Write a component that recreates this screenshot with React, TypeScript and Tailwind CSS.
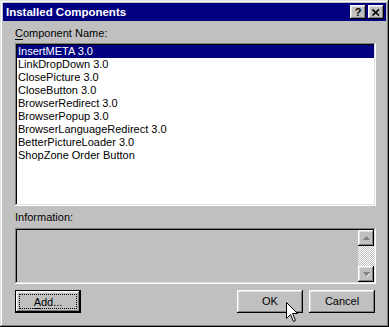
import React from "react";

const ITEMS = [
  "InsertMETA 3.0",
  "LinkDropDown 3.0",
  "ClosePicture 3.0",
  "CloseButton 3.0",
  "BrowserRedirect 3.0",
  "BrowserPopup 3.0",
  "BrowserLanguageRedirect 3.0",
  "BetterPictureLoader 3.0",
  "ShopZone Order Button",
];

const raised =
  "shadow-[inset_-1px_-1px_#000000,inset_1px_1px_#ffffff,inset_-2px_-2px_#808080,inset_2px_2px_#dfdfdf]";
const sunken =
  "shadow-[inset_-1px_-1px_#ffffff,inset_1px_1px_#808080,inset_-2px_-2px_#dfdfdf,inset_2px_2px_#000000]";

function Arrow({ up }: { up?: boolean }) {
  return (
    <svg width="7" height="5" viewBox="0 0 7 5" className="block">
      {up ? (
        <path d="M3.5 0 L7 4 L0 4 Z" fill="#808080" />
      ) : (
        <>
          <path d="M0 0 L7 0 L3.5 4 Z" fill="#808080" />
          <path d="M4 4.5 L7 1.5" stroke="#ffffff" strokeWidth="1" />
        </>
      )}
    </svg>
  );
}

function Button({ label, accel, isDefault }: { label: string; accel?: boolean; isDefault?: boolean }) {
  const text = accel ? (
    <>
      <span className="underline underline-offset-2">{label[0]}</span>
      {label.slice(1)}
    </>
  ) : (
    label
  );
  if (isDefault) {
    return (
      <div className="w-[66px] h-[23px] border border-black">
        <div className={`w-full h-full p-[3px] ${raised}`}>
          <div className="w-full h-full border border-dotted border-black flex items-center justify-center pt-px">
            {text}
          </div>
        </div>
      </div>
    );
  }
  return (
    <div className={`w-[66px] h-[23px] flex items-center justify-center ${raised}`}>{text}</div>
  );
}

export default function App() {
  return (
    <div
      className="relative w-[389px] h-[327px] bg-[#c0c0c0] p-[3px] flex flex-col text-[11px] leading-[13px] text-black select-none shadow-[inset_-1px_-1px_#000000,inset_1px_1px_#dfdfdf,inset_-2px_-2px_#808080,inset_2px_2px_#ffffff]"
      style={{ fontFamily: '"Liberation Sans", Arial, sans-serif' }}
    >
      {/* Title bar */}
      <div className="h-[18px] bg-[#000080] flex items-center pl-[3px] pr-[2px]">
        <span className="text-white font-bold text-[11.5px] flex-1">Installed Components</span>
        <div
          className={`w-[16px] h-[14px] bg-[#c0c0c0] text-black flex items-center justify-center font-bold text-[11px] ${raised}`}
        >
          ?
        </div>
        <div className={`ml-[2px] w-[16px] h-[14px] bg-[#c0c0c0] flex items-center justify-center ${raised}`}>
          <svg width="8" height="7" viewBox="0 0 8 7">
            <path d="M0.5 0.5 L7 6.5 M7 0.5 L0.5 6.5" stroke="#000" strokeWidth="1.6" />
          </svg>
        </div>
      </div>

      <div className="flex flex-col pl-[12px]">
        <div className="mt-[6px] h-[13px]">
          <span className="underline underline-offset-2">C</span>omponent Name:
        </div>

        {/* List box */}
        <div className={`mt-[3px] w-[361px] h-[163px] bg-white p-[2px] ${sunken}`}>
          <div className="flex flex-col">
            {ITEMS.map((item, i) => (
              <div
                key={item}
                className={`h-[13px] pl-[1px] ${i === 0 ? "bg-[#000080] text-white" : ""}`}
              >
                {item}
              </div>
            ))}
          </div>
        </div>

        <div className="mt-[5px] h-[13px]">Information:</div>

        {/* Information box */}
        <div className={`mt-[4px] w-[361px] h-[56px] p-[2px] flex justify-end ${sunken}`}>
          <div className="w-[16px] flex flex-col">
            <div className={`h-[16px] flex items-center justify-center ${raised}`}>
              <Arrow up />
            </div>
            <div className="flex-1 bg-[repeating-conic-gradient(#c0c0c0_0_25%,#ffffff_0_50%)] bg-[length:2px_2px]" />
            <div className={`h-[16px] flex items-center justify-center ${raised}`}>
              <Arrow />
            </div>
          </div>
        </div>

        {/* Buttons */}
        <div className="mt-[6px] flex w-[361px] pr-[1px]">
          <Button label="Add..." accel isDefault />
          <div className="flex-1" />
          <Button label="OK" />
          <div className="w-[6px]" />
          <Button label="Cancel" />
        </div>
      </div>

      {/* Mouse cursor */}
      <svg className="absolute left-[286px] top-[302px]" width="13" height="21" viewBox="0 0 13 21">
        <path
          d="M0.5 0.5 L0.5 16.5 L4.5 12.5 L7.5 19.5 L9.5 18.5 L6.5 11.5 L11.5 11.5 Z"
          fill="#ffffff"
          stroke="#000000"
          strokeWidth="1"
        />
      </svg>
    </div>
  );
}
